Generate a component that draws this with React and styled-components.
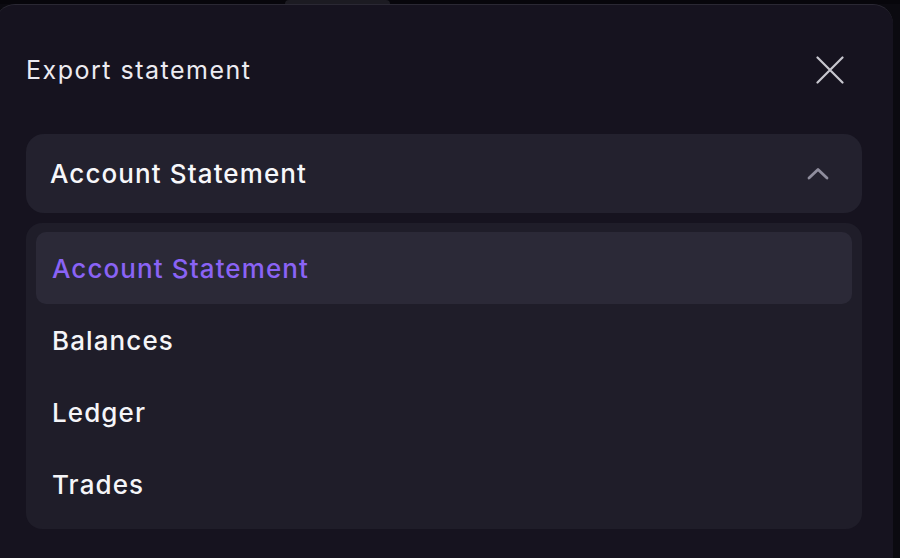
import styled, { createGlobalStyle } from "styled-components";
import { useState } from "react";

const GlobalStyle = createGlobalStyle`
  html, body {
    margin: 0;
    padding: 0;
    background: #09080d;
    overflow: hidden;
  }
  body {
    font-family: Inter, "Noto Sans", sans-serif;
    -webkit-font-smoothing: antialiased;
  }
`;

const REPORTS = ["Account Statement", "Balances", "Ledger", "Trades"];

const App = () => {
  const [selected, setSelected] = useState("Account Statement");
  const [open, setOpen] = useState(true);

  return (
    <>
      <GlobalStyle />
      <Page>
        <Backdrop>
          <BackdropTab />
        </Backdrop>
        <Sheet>
          <Header>
            <Title>Export statement</Title>
            <CloseButton aria-label="Close">
              <svg width="28" height="28" viewBox="0 0 28 28" fill="none">
                <path
                  d="M1.5 1.5 L26.5 26.5 M26.5 1.5 L1.5 26.5"
                  stroke="#c8c7cf"
                  strokeWidth="2.2"
                  strokeLinecap="round"
                />
              </svg>
            </CloseButton>
          </Header>

          <SelectBox onClick={() => setOpen(!open)}>
            <SelectValue>{selected}</SelectValue>
            <svg width="22" height="13" viewBox="0 0 22 13" fill="none">
              <path
                d={open ? "M2 11 L11 2.5 L20 11" : "M2 2 L11 10.5 L20 2"}
                stroke="#8f8d9d"
                strokeWidth="2.8"
                strokeLinecap="round"
                strokeLinejoin="round"
              />
            </svg>
          </SelectBox>

          {open && (
            <OptionList>
              {REPORTS.map((r) => (
                <Option
                  key={r}
                  $active={r === selected}
                  onClick={() => setSelected(r)}
                >
                  {r}
                </Option>
              ))}
            </OptionList>
          )}
        </Sheet>
      </Page>
    </>
  );
};

const Page = styled.div`
  width: 900px;
  height: 558px;
  overflow: hidden;
  background: #0b0a10;
`;

const Backdrop = styled.div`
  height: 4px;
  padding-left: 285px;
  background: #07060b;
`;

const BackdropTab = styled.div`
  width: 105px;
  height: 4px;
  background: #1c1b22;
  border-radius: 6px 6px 0 0;
`;

const Sheet = styled.div`
  box-sizing: border-box;
  margin-left: -5px;
  width: 898px;
  height: 600px;
  padding: 51px 31px 0;
  background: #16131f;
  border-top: 1px solid #2a2833;
  border-radius: 20px 20px 0 0;
`;

const Header = styled.div`
  display: flex;
  align-items: center;
  justify-content: space-between;
  height: 30px;
  margin-top: -1px;
  margin-bottom: 49px;
`;

const Title = styled.h2`
  margin: 0;
  font-size: 25px;
  font-weight: 400;
  color: #ecebf1;
  letter-spacing: 1.5px;
`;

const CloseButton = styled.button`
  display: flex;
  padding: 0;
  margin-right: 18px;
  border: none;
  background: none;
  cursor: pointer;
`;

const SelectBox = styled.div`
  box-sizing: border-box;
  display: flex;
  align-items: center;
  justify-content: space-between;
  height: 79px;
  padding: 0 33px 0 24px;
  background: #23212e;
  border-radius: 18px;
  cursor: pointer;
`;

const SelectValue = styled.span`
  font-size: 26px;
  font-weight: 550;
  letter-spacing: 1.1px;
  color: #f7f7fa;
`;

const OptionList = styled.div`
  display: flex;
  flex-direction: column;
  margin-top: 10px;
  padding: 9px 10px;
  background: #1f1d29;
  border-radius: 16px;
`;

const Option = styled.div`
  display: flex;
  align-items: center;
  height: 72px;
  padding: 0 16px;
  border-radius: 10px;
  font-size: 26px;
  font-weight: 550;
  letter-spacing: 1.1px;
  color: ${(p) => (p.$active ? "#8a63f5" : "#f5f5f8")};
  background: ${(p) => (p.$active ? "#2b2937" : "transparent")};
  cursor: pointer;
`;

export default App;
